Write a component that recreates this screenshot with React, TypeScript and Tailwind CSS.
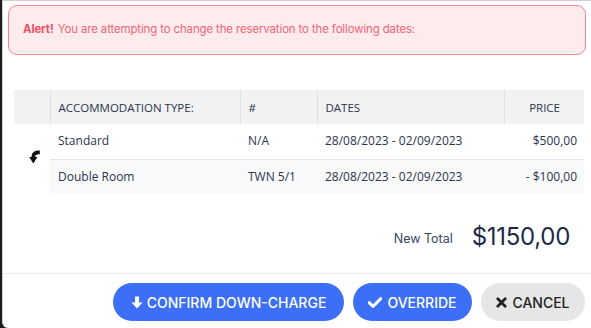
import React from 'react';

const rows = [
  { type: 'Standard', num: 'N/A', dates: '28/08/2023 - 02/09/2023', price: '$500,00' },
  { type: 'Double Room', num: 'TWN 5/1', dates: '28/08/2023 - 02/09/2023', price: '- $100,00' },
];

const TurnDown = () => (
  <svg width="11" height="14" viewBox="0 0 11 14">
    <path d="M10.8 0.6 C5.5 0.2 2.6 2.4 2.6 7 L0.2 7 L4.3 13.6 L8.4 7 L6.2 7 C6.2 5 7.6 4.2 10.8 4.4 Z" fill="#111" />
  </svg>
);

const ArrowDown = () => (
  <svg width="12" height="13" viewBox="0 0 12 13">
    <path d="M4 0.5 H8 V6.5 H11.5 L6 12.5 L0.5 6.5 H4 Z" fill="#fff" />
  </svg>
);

const Check = () => (
  <svg width="14" height="11" viewBox="0 0 14 11">
    <path d="M1.2 5.6 L5 9.4 L12.8 1.6" stroke="#fff" strokeWidth="3" fill="none" strokeLinecap="round" strokeLinejoin="round" />
  </svg>
);

const Times = () => (
  <svg width="11" height="11" viewBox="0 0 11 11">
    <path d="M1.8 1.8 L9.2 9.2 M9.2 1.8 L1.8 9.2" stroke="#222" strokeWidth="2.8" strokeLinecap="round" />
  </svg>
);

export default function App() {
  return (
    <div className="w-[591px] h-[328px] bg-[#1c1c1c] pl-[2px] overflow-hidden">
      <div className="h-full bg-white border-l border-t border-[#cfcfcf] rounded-bl-[6px] flex flex-col relative">
        <div className="px-[5px] pt-[4px]">
          <div className="h-[50px] rounded-[9px] border border-[#f6868a] bg-[#fdebed] flex items-center pl-[14px] text-[11.4px] text-[#f06577] font-['Inter',sans-serif] tracking-[-0.1px]">
            <span className="font-bold text-[#f04f65] mr-[4px]">Alert!</span>
            <span>You are attempting to change the reservation to the following dates:</span>
          </div>
        </div>

        <div className="mt-[35px] ml-[11px] mr-[7px] font-['Open_Sans',sans-serif] text-[12px] text-[#2a3550]">
          <table className="w-full border-collapse">
            <thead>
              <tr className="bg-[#f2f2f2] h-[34px] text-[11.5px] uppercase">
                <th className="w-[36px] border-r border-[#e0e0e0]"></th>
                <th className="text-left font-normal pl-[8px] pt-[2px] w-[190px] border-r border-[#e0e0e0]">Accommodation Type:</th>
                <th className="text-left font-normal pl-[8px] pt-[2px] w-[77px] border-r border-[#e0e0e0]">#</th>
                <th className="text-left font-normal pl-[8px] pt-[2px] w-[187px] border-r border-[#e0e0e0]">Dates</th>
                <th className="text-right font-normal pr-[24px] pt-[2px]">Price</th>
              </tr>
            </thead>
            <tbody>
              {rows.map((r, i) => (
                <tr key={r.type} className={i === 1 ? 'bg-[#f9f9f9] h-[35px]' : 'bg-white h-[35px] border-b border-[#e3e3e3]'}>
                  {i === 0 && (
                    <td rowSpan={2} className="bg-white align-middle">
                      <div className="flex justify-center pl-[4px] pb-[4px]">
                        <TurnDown />
                      </div>
                    </td>
                  )}
                  <td className="pl-[8px]">{r.type}</td>
                  <td className="pl-[8px]">{r.num}</td>
                  <td className="pl-[8px]">{r.dates}</td>
                  <td className="text-right pr-[7px]">{r.price}</td>
                </tr>
              ))}
            </tbody>
          </table>
        </div>

        <div className="flex items-center justify-end mt-[25px] pr-[21px] font-['Inter',sans-serif] text-[#1e2a4a]">
          <span className="text-[12.5px] text-[#3a4560] mr-[19px] mt-[4px]">New Total</span>
          <span className="text-[24px] tracking-[-0.3px]">$1150,00</span>
        </div>

        <div className="mt-[18px] border-t border-[#ececec]" />

        <div className="flex justify-end gap-[9px] pr-[6px] pt-[9px] font-['Inter',sans-serif] text-[14px] font-medium">
          <button className="h-[38px] w-[231px] rounded-full bg-[#3c6ff5] text-white flex items-center justify-center gap-[4px]">
            <ArrowDown />
            <span>CONFIRM DOWN-CHARGE</span>
          </button>
          <button className="h-[38px] w-[119px] rounded-full bg-[#3c6ff5] text-white flex items-center justify-center gap-[5px]">
            <Check />
            <span>OVERRIDE</span>
          </button>
          <button className="h-[38px] w-[104px] rounded-full bg-[#e6e6e6] text-[#222] flex items-center justify-center gap-[5px]">
            <Times />
            <span>CANCEL</span>
          </button>
        </div>
      </div>
    </div>
  );
}
